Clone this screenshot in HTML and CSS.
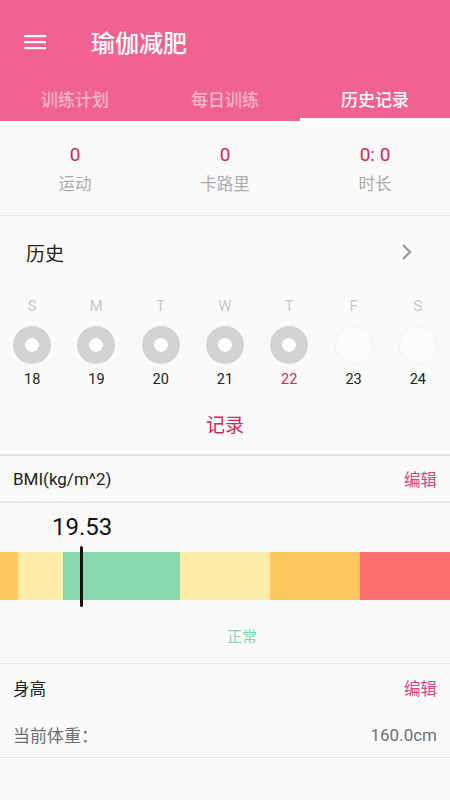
FILE: index.html
```html
<!DOCTYPE html>
<html lang="zh">
<head>
<meta charset="utf-8">
<link rel="stylesheet" href="styles.css">
</head>
<body>
<div class="app">
  <header class="header">
    <div class="toolbar">
      <svg class="menu" width="22" height="16" viewBox="0 0 22 16"><rect x="0" y="1" width="22" height="2.2" fill="#fff"/><rect x="0" y="7" width="22" height="2.2" fill="#fff"/><rect x="0" y="13" width="22" height="2.2" fill="#fff"/></svg>
      <div class="title">瑜伽减肥</div>
    </div>
    <nav class="tabs">
      <div class="tab">训练计划</div>
      <div class="tab">每日训练</div>
      <div class="tab active">历史记录</div>
    </nav>
  </header>

  <section class="stats">
    <div class="stat"><div class="num">0</div><div class="lbl">运动</div></div>
    <div class="stat"><div class="num">0</div><div class="lbl">卡路里</div></div>
    <div class="stat"><div class="num">0: 0</div><div class="lbl">时长</div></div>
  </section>

  <section class="history">
    <div class="hist-head">
      <span class="hist-title">历史</span>
      <svg class="chev" width="12" height="18" viewBox="0 0 12 18"><path d="M2 2 L9 9 L2 16" fill="none" stroke="#9e9e9e" stroke-width="2.4"/></svg>
    </div>
    <div class="week">
      <div class="day"><span class="wd">S</span><span class="dot done"></span><span class="dn">18</span></div>
      <div class="day"><span class="wd">M</span><span class="dot done"></span><span class="dn">19</span></div>
      <div class="day"><span class="wd">T</span><span class="dot done"></span><span class="dn">20</span></div>
      <div class="day"><span class="wd">W</span><span class="dot done"></span><span class="dn">21</span></div>
      <div class="day"><span class="wd">T</span><span class="dot done"></span><span class="dn today">22</span></div>
      <div class="day"><span class="wd">F</span><span class="dot future"></span><span class="dn">23</span></div>
      <div class="day"><span class="wd">S</span><span class="dot future"></span><span class="dn">24</span></div>
    </div>
    <div class="record">记录</div>
  </section>

  <section class="row-head bmi-head">
    <span class="row-title">BMI(kg/m^2)</span>
    <span class="edit">编辑</span>
  </section>

  <section class="bmi">
    <div class="bmi-val">19.53</div>
    <div class="bar">
      <div class="seg s1"></div>
      <div class="seg s2"></div>
      <div class="seg s3"></div>
      <div class="seg s4"></div>
      <div class="seg s5"></div>
      <div class="seg s6"></div>
      <div class="marker"></div>
    </div>
    <div class="bmi-state">正常</div>
  </section>

  <section class="height">
    <div class="row-head">
      <span class="row-title">身高</span>
      <span class="edit">编辑</span>
    </div>
    <div class="row-info">
      <span>当前体重：</span>
      <span>160.0cm</span>
    </div>
  </section>
</div>
</body>
</html>
```

FILE: styles.css
```css
* { box-sizing: border-box; }
html, body { margin: 0; padding: 0; }
body {
  width: 450px;
  height: 800px;
  overflow: hidden;
  background: #fafafa;
  font-family: Roboto, "Noto Sans CJK SC", sans-serif;
}
.app { width: 450px; }

.header { background: #f06292; }
.toolbar {
  height: 85px;
  display: flex;
  align-items: center;
  padding-left: 24px;
  padding-bottom: 2px;
}
.menu { display: block; }
.title {
  margin-left: 45px;
  color: #fff;
  font-size: 24px;
  font-weight: 500;
}
.tabs {
  display: flex;
  height: 36px;
}
.tab {
  flex: 1;
  text-align: center;
  color: #f8b4cb;
  font-size: 17px;
  font-weight: 500;
  line-height: 30px;
  border-bottom: 3px solid transparent;
}
.tab.active {
  color: #fff;
  border-bottom-color: #fff;
}

.stats {
  height: 95px;
  display: flex;
  padding: 22px 0 0;
  border-bottom: 1px solid #e6e6e6;
}
.stat { flex: 1; text-align: center; }
.num {
  color: #c9285a;
  font-size: 19px;
  line-height: 24px;
}
.lbl {
  color: #ababab;
  font-size: 16.5px;
  line-height: 24px;
  margin-top: 6px;
}

.history {
  border-bottom: 2px solid #e4e4e4;
  padding-bottom: 16px;
}
.hist-head {
  display: flex;
  align-items: center;
  justify-content: space-between;
  height: 72px;
  padding: 0 37px 0 26px;
}
.hist-title { font-size: 19px; color: #222; }
.chev { display: block; }
.week {
  display: flex;
  margin-top: 8px;
}
.day {
  flex: 1;
  display: flex;
  flex-direction: column;
  align-items: center;
}
.wd {
  color: #c8c8c8;
  font-size: 15px;
  line-height: 20px;
}
.dot {
  width: 38px;
  height: 38px;
  border-radius: 50%;
  margin-top: 10px;
}
.dot.done { background: radial-gradient(circle, #fff 0 6.5px, #d3d3d3 7px); }
.dot.future { border: 1.5px solid #fcefef; background: #fdfcfc; }
.dn {
  color: #222;
  font-size: 14.5px;
  line-height: 20px;
  margin-top: 6px;
}
.dn.today { color: #c9285a; }
.record {
  text-align: center;
  color: #c9285a;
  font-size: 19px;
  line-height: 24px;
  margin-top: 24px;
}

.row-head {
  display: flex;
  justify-content: space-between;
  align-items: center;
  padding: 0 13px;
}
.bmi-head {
  height: 47px;
  border-bottom: 2px solid #e8e8e8;
}
.row-title { font-size: 17px; color: #222; }
.edit { font-size: 16.5px; color: #d6477c; }

.bmi {
  border-bottom: 1px solid #e4e4e4;
  height: 161px;
  padding-top: 10px;
}
.bmi-val {
  padding-left: 52px;
  font-size: 24px;
  color: #111;
  line-height: 28px;
}
.bar {
  position: relative;
  display: flex;
  height: 48px;
  margin-top: 11px;
}
.seg { height: 100%; }
.s1 { width: 18px; background: #ffc85c; }
.s2 { width: 45px; background: #ffeba8; }
.s3 { width: 117px; background: #88d9b0; }
.s4 { width: 90px; background: #ffeba8; }
.s5 { width: 90px; background: #ffc85c; }
.s6 { flex: 1; background: #ff6e6a; }
.marker {
  position: absolute;
  left: 80px;
  top: -6px;
  width: 3px;
  height: 61px;
  background: #111;
  border-radius: 2px;
}
.bmi-state {
  text-align: center;
  padding-left: 34px;
  color: #7fd4ae;
  font-size: 15px;
  margin-top: 25px;
}

.height {
  border-bottom: 1px solid #e4e4e4;
}
.height .row-head { height: 48px; }
.height .row-title { font-size: 16.5px; }
.row-info {
  display: flex;
  justify-content: space-between;
  align-items: center;
  padding: 0 13px;
  height: 45px;
  color: #6e6e6e;
  font-size: 17px;
}
```
